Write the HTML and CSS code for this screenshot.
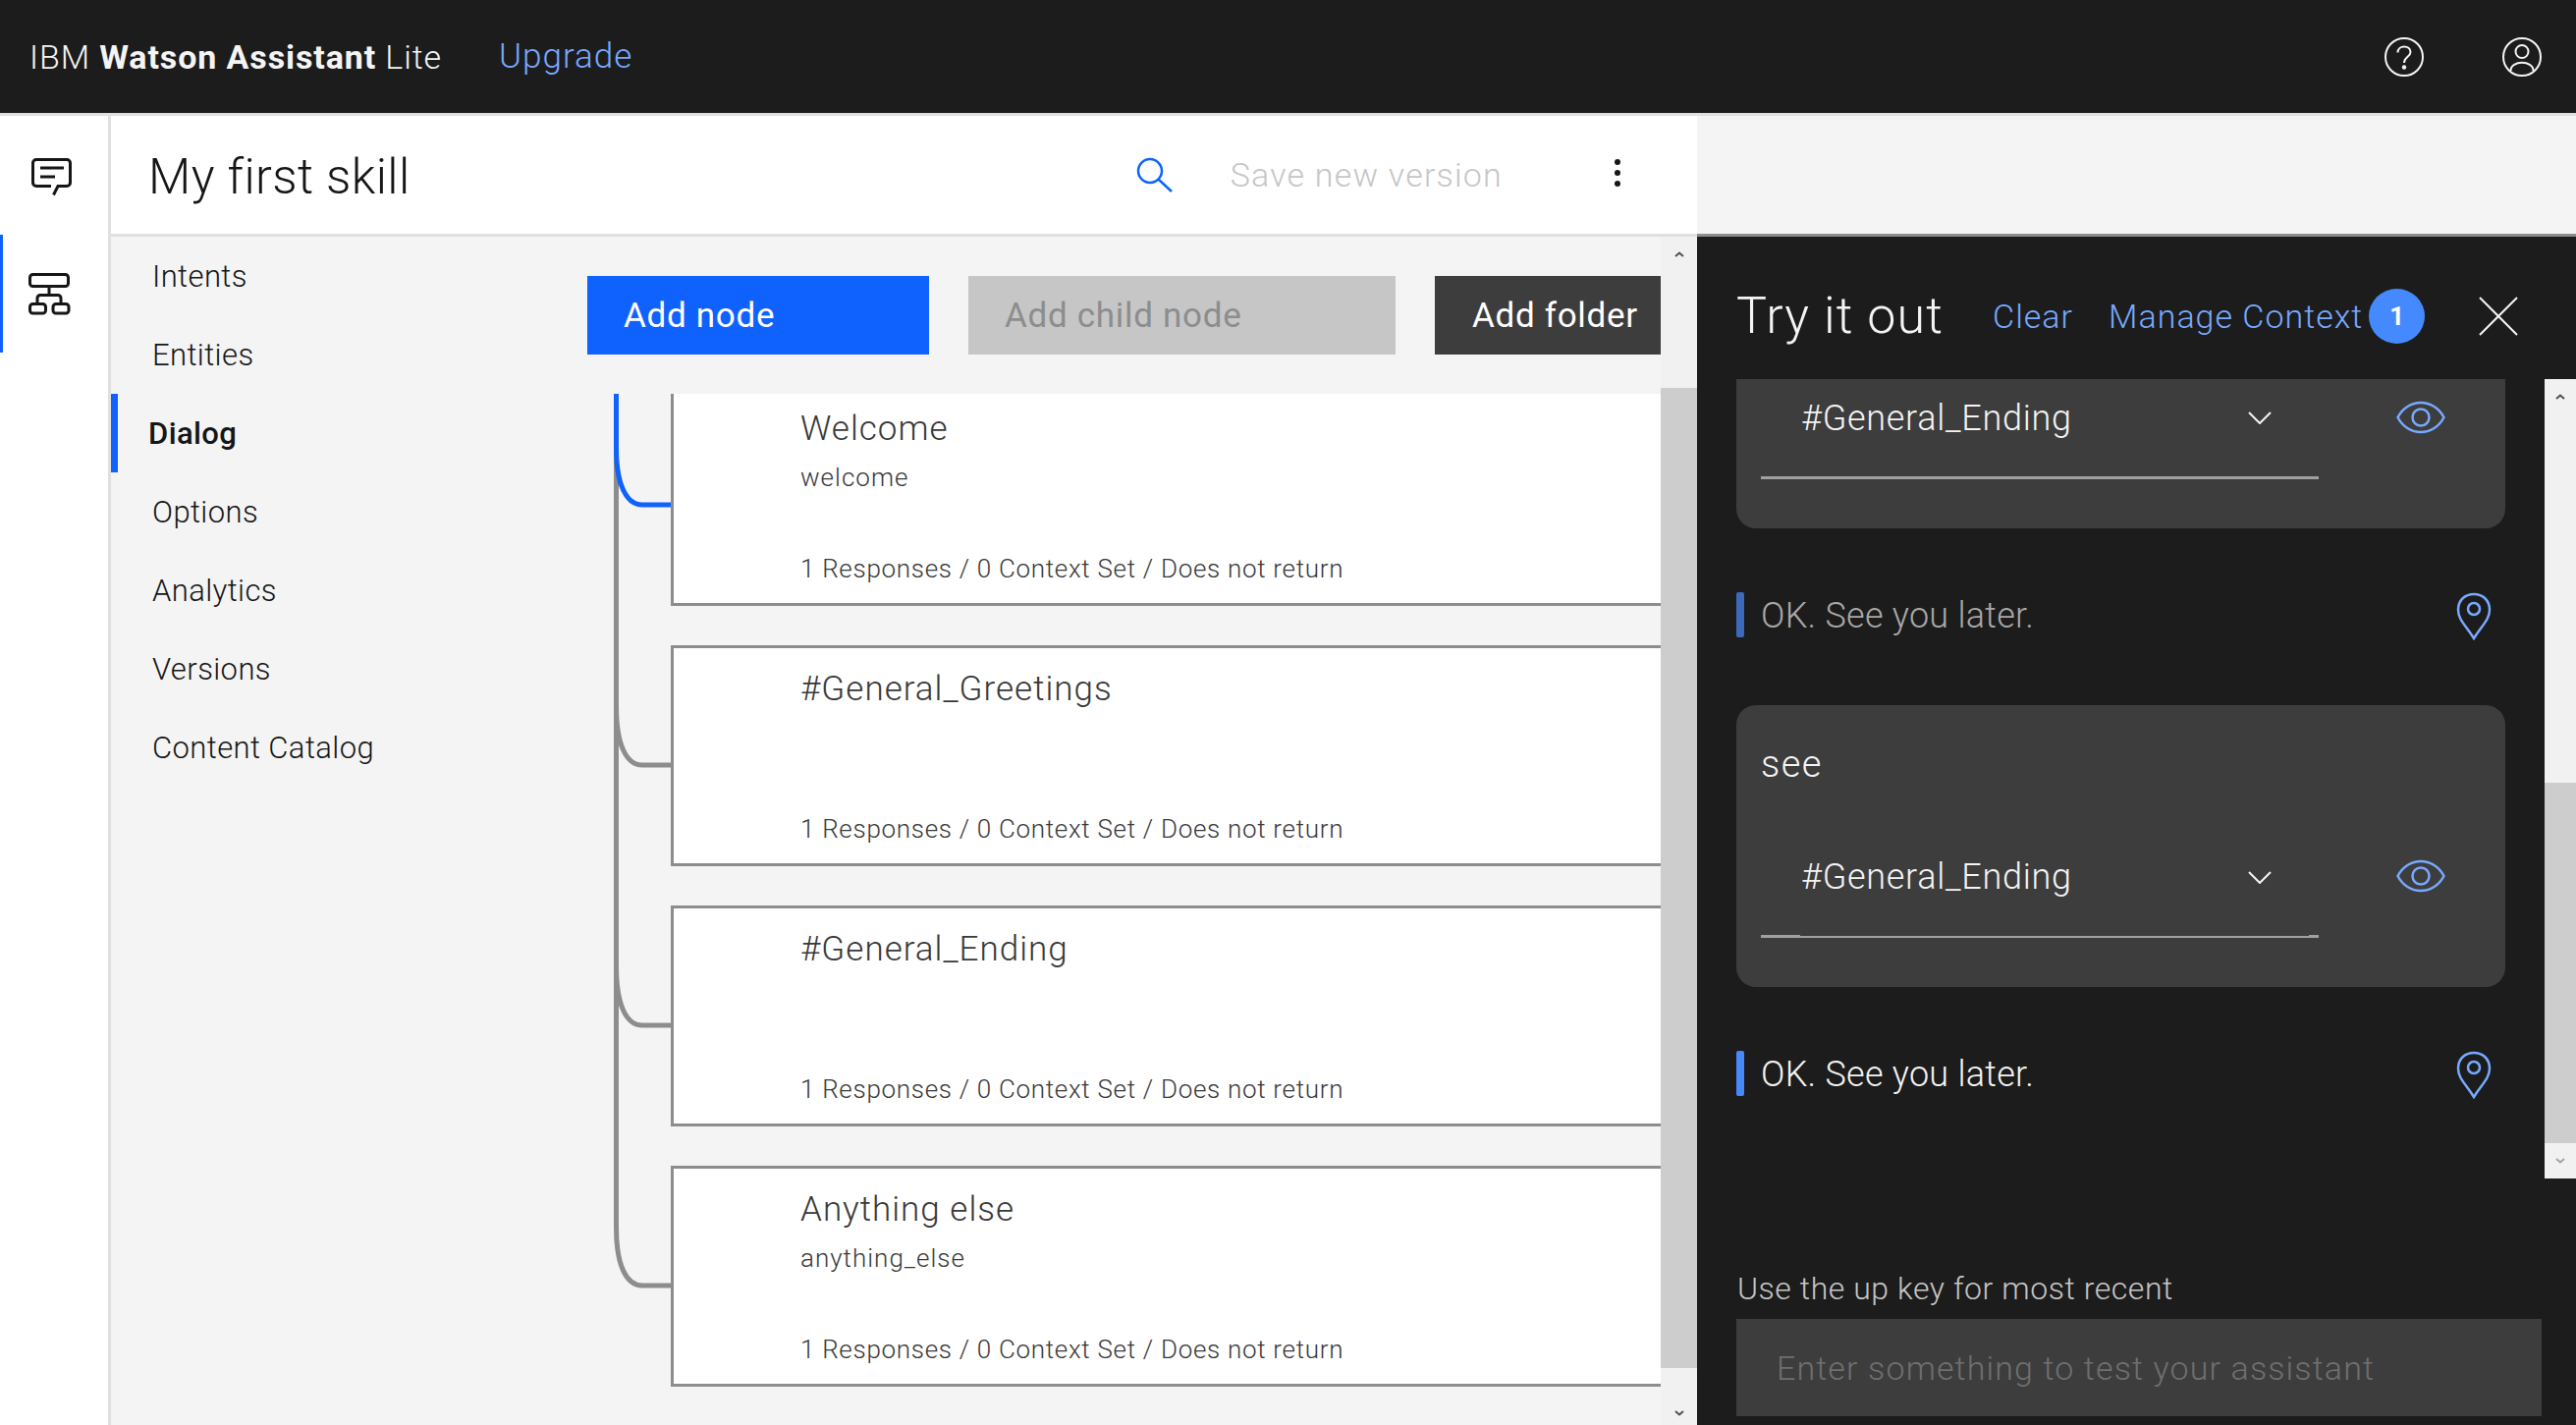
FILE: index.html
```html
<!DOCTYPE html>
<html lang="en">
<head>
  <meta charset="UTF-8" />
  <title>IBM Watson Assistant Lite</title>
  <link rel="stylesheet" href="styles.css">
</head>
<body>

  <header class="topbar">
    <div class="brand">IBM <b>Watson Assistant</b> Lite</div>
    <a class="upgrade" href="#">Upgrade</a>
    <svg class="top-icon help" viewBox="0 0 40 40">
      <circle cx="20" cy="20" r="19"/>
      <path d="M13.5 15.5 C13.5 7.5 26.5 7.5 26.5 15 C26.5 20 20 19.5 20 26"/>
      <circle class="dot" cx="20" cy="30.5" r="2.2"/>
    </svg>
    <svg class="top-icon" viewBox="0 0 40 40">
      <circle cx="20" cy="20" r="19"/>
      <circle cx="20" cy="14.5" r="6.5"/>
      <path d="M8.5 34 C8.5 23 31.5 23 31.5 34"/>
    </svg>
  </header>

  <div class="main">
    <aside class="rail">
      <div class="rail-item chat-item">
        <svg class="rail-icon" viewBox="0 0 48 48">
          <path d="M23 29.5 H8 a3.5 3.5 0 0 1 -3.5 -3.5 V6 a3.5 3.5 0 0 1 3.5 -3.5 H39 a3.5 3.5 0 0 1 3.5 3.5 V26 a3.5 3.5 0 0 1 -3.5 3.5 H30 L25.5 38.5"/>
          <path d="M12 11 H36 M12 20 H27"/>
        </svg>
      </div>
      <div class="rail-item tree-item active">
        <svg class="rail-icon" viewBox="0 0 48 48">
          <rect x="1.5" y="4.5" width="39" height="12" rx="3"/>
          <path d="M21 16.5 V25.5 M9 33 V28.5 a3 3 0 0 1 3 -3 H30 a3 3 0 0 1 3 3 V33"/>
          <rect x="1.5" y="34.5" width="16" height="9.5" rx="3"/>
          <rect x="25" y="34.5" width="16" height="9.5" rx="3"/>
        </svg>
      </div>
    </aside>

    <div class="workspace">
      <div class="skill-head">
        <h1>My first skill</h1>
        <svg class="search" viewBox="0 0 38 36">
          <circle cx="14" cy="14" r="12"/>
          <path d="M22.5 22.5 L36 35"/>
        </svg>
        <span class="save">Save new version</span>
        <div class="more"><i></i><i></i><i></i></div>
      </div>

      <div class="skill-body">
        <nav class="sidenav">
          <a href="#">Intents</a>
          <a href="#">Entities</a>
          <a href="#" class="current">Dialog</a>
          <a href="#">Options</a>
          <a href="#">Analytics</a>
          <a href="#">Versions</a>
          <a href="#">Content Catalog</a>
        </nav>

        <section class="dialog">
          <div class="toolbar">
            <button class="btn btn-add">Add node</button>
            <button class="btn btn-child">Add child node</button>
            <button class="btn btn-folder">Add folder</button>
          </div>
          <div class="tree">
            <svg class="links" viewBox="0 0 90 1000">
              <path d="M29.5 0 V849 C29.5 888 40 908 56 908 H85"/>
              <path d="M29.5 318 C29.5 358 40 378 56 378 H85"/>
              <path d="M29.5 583 C29.5 623 40 643 56 643 H85"/>
              <path class="selected" d="M29.5 0 V55 C29.5 93 40 113 56 113 H86"/>
            </svg>
            <div class="node first">
              <div class="node-title">Welcome</div>
              <div class="node-sub">welcome</div>
              <div class="node-meta">1 Responses / 0 Context Set / Does not return</div>
            </div>
            <div class="node">
              <div class="node-title">#General_Greetings</div>
              <div class="node-sub"></div>
              <div class="node-meta">1 Responses / 0 Context Set / Does not return</div>
            </div>
            <div class="node">
              <div class="node-title">#General_Ending</div>
              <div class="node-sub"></div>
              <div class="node-meta">1 Responses / 0 Context Set / Does not return</div>
            </div>
            <div class="node">
              <div class="node-title">Anything else</div>
              <div class="node-sub">anything_else</div>
              <div class="node-meta">1 Responses / 0 Context Set / Does not return</div>
            </div>
          </div>
        </section>

        <div class="scrollbar main-scroll">
          <svg class="arrow" viewBox="0 0 10 6"><path d="M1 5 L5 1.5 L9 5"/></svg>
          <div class="thumb"></div>
          <svg class="arrow" viewBox="0 0 10 6"><path d="M1 1 L5 4.5 L9 1"/></svg>
        </div>
      </div>
    </div>

    <div class="side">
      <div class="side-top"></div>
      <section class="panel">
        <div class="panel-head">
          <h2>Try it out</h2>
          <a class="clear" href="#">Clear</a>
          <a class="context" href="#">Manage Context</a>
          <span class="badge">1</span>
          <svg class="close" viewBox="0 0 40 40"><path d="M1 1 L39 39 M39 1 L1 39"/></svg>
        </div>

        <div class="chat">
          <div class="log">
            <div class="card clipped">
              <div class="intent-row">
                <div class="select">
                  <span>#General_Ending</span>
                  <svg class="chevron" viewBox="0 0 24 13"><path d="M1 1 L12 12 L23 1"/></svg>
                </div>
                <svg class="eye" viewBox="0 0 50 34">
                  <path d="M1.5 17 C12 -3 38 -3 48.5 17 C38 37 12 37 1.5 17 Z"/>
                  <circle cx="25" cy="17" r="8.5"/>
                </svg>
              </div>
            </div>
            <div class="reply old">
              <div class="reply-bar"></div>
              <div class="reply-text">OK. See you later.</div>
              <svg class="pin" viewBox="0 0 36 49">
                <path d="M18 47 C10 34 2 28 2 18 C2 8 9 2 18 2 C27 2 34 8 34 18 C34 28 26 34 18 47 Z"/>
                <circle cx="18" cy="17" r="6"/>
              </svg>
            </div>
            <div class="card">
              <div class="user-text">see</div>
              <div class="intent-row">
                <div class="select focused">
                  <span>#General_Ending</span>
                  <svg class="chevron" viewBox="0 0 24 13"><path d="M1 1 L12 12 L23 1"/></svg>
                </div>
                <svg class="eye" viewBox="0 0 50 34">
                  <path d="M1.5 17 C12 -3 38 -3 48.5 17 C38 37 12 37 1.5 17 Z"/>
                  <circle cx="25" cy="17" r="8.5"/>
                </svg>
              </div>
            </div>
            <div class="reply">
              <div class="reply-bar"></div>
              <div class="reply-text">OK. See you later.</div>
              <svg class="pin" viewBox="0 0 36 49">
                <path d="M18 47 C10 34 2 28 2 18 C2 8 9 2 18 2 C27 2 34 8 34 18 C34 28 26 34 18 47 Z"/>
                <circle cx="18" cy="17" r="6"/>
              </svg>
            </div>
          </div>
          <div class="scrollbar chat-scroll">
            <svg class="arrow" viewBox="0 0 10 6"><path d="M1 5 L5 1.5 L9 5"/></svg>
            <div class="thumb"></div>
            <svg class="arrow faded" viewBox="0 0 10 6"><path d="M1 1 L5 4.5 L9 1"/></svg>
          </div>
        </div>

        <div class="hint">Use the up key for most recent</div>
        <div class="test-input">Enter something to test your assistant</div>
      </section>
    </div>
  </div>

</body>
</html>
```

FILE: styles.css
```css
* {
  box-sizing: border-box;
}

body {
  margin: 0;
  width: 2623px;
  height: 1451px;
  overflow: hidden;
  font-family: 'Roboto', 'Liberation Sans', sans-serif;
  background-color: #f4f4f4;
  color: #161616;
}

a {
  text-decoration: none;
}

svg {
  display: block;
  flex: none;
  fill: none;
}

/* top bar */
.topbar {
  height: 118px;
  background-color: #1c1c1c;
  border-bottom: 3px solid #e0e0e0;
  display: flex;
  align-items: center;
  padding: 0 35px 0 30px;
  color: #f4f4f4;
}

.brand {
  font-size: 34px;
  font-weight: 300;
  letter-spacing: 0.9px;
}

.brand b {
  font-weight: 700;
}

.upgrade {
  margin-left: 58px;
  font-size: 35px;
  font-weight: 300;
  letter-spacing: 1px;
  color: #78a9ff;
}

.top-icon {
  width: 40px;
  height: 40px;
  margin-left: 80px;
  stroke: #f4f4f4;
  stroke-width: 2;
}

.top-icon.help {
  margin-left: auto;
}

.top-icon .dot {
  fill: #f4f4f4;
  stroke: none;
}

.main {
  display: flex;
  height: 1333px;
}

/* left rail */
.rail {
  width: 113px;
  background-color: #fff;
  border-right: 3px solid #e0e0e0;
}

.rail-item {
  padding-left: 29px;
}

.chat-item {
  height: 121px;
  padding-top: 42px;
}

.tree-item {
  height: 120px;
  padding-top: 36px;
}

.tree-item.active {
  box-shadow: inset 3px 0 0 #0f62fe;
}

.rail-icon {
  width: 48px;
  height: 48px;
  stroke: #161616;
  stroke-width: 3;
}

/* skill area */
.workspace {
  width: 1615px;
}

.skill-head {
  height: 123px;
  background-color: #fff;
  border-bottom: 3px solid #e0e0e0;
  display: flex;
  align-items: center;
  padding-left: 38px;
}

.skill-head h1 {
  margin: 4px 0 0;
  font-size: 50px;
  font-weight: 300;
  letter-spacing: 0.4px;
  color: #161616;
}

.search {
  width: 38px;
  height: 36px;
  margin-left: auto;
  stroke: #0f62fe;
  stroke-width: 2.5;
}

.save {
  margin-left: 58px;
  font-size: 34px;
  font-weight: 300;
  letter-spacing: 1.2px;
  color: #c6c6c6;
}

.more {
  width: 8px;
  margin-left: 114px;
  margin-right: 76px;
}

.more i {
  display: block;
  width: 6px;
  height: 6px;
  margin-bottom: 5px;
  border-radius: 50%;
  background-color: #161616;
}

.skill-body {
  display: flex;
  height: 1210px;
}

.sidenav {
  width: 485px;
  padding-top: 0;
}

.sidenav a {
  display: flex;
  align-items: center;
  height: 80px;
  padding-left: 42px;
  font-size: 31px;
  font-weight: 300;
  letter-spacing: 0.4px;
  color: #161616;
}

.sidenav a.current {
  padding-left: 31px;
  font-weight: 500;
  border-left: 7px solid #0f62fe;
}

.dialog {
  width: 1093px;
}

.toolbar {
  display: flex;
  gap: 40px;
  height: 160px;
  padding-top: 40px;
}

.btn {
  height: 80px;
  padding: 0 0 0 37px;
  border: none;
  text-align: left;
  font-family: inherit;
  font-size: 35px;
  font-weight: 400;
  letter-spacing: 0.7px;
  color: #fff;
}

.btn-add {
  width: 348px;
  background-color: #0f62fe;
}

.btn-child {
  width: 435px;
  background-color: #c6c6c6;
  color: #8d8d8d;
}

.btn-folder {
  width: 230px;
  padding-left: 38px;
  background-color: #3d3d3d;
}

.tree {
  position: relative;
  height: 1050px;
  overflow: hidden;
  padding-left: 85px;
}

.links {
  position: absolute;
  left: 0;
  top: 0;
  width: 90px;
  height: 1000px;
  stroke: #8d8d8d;
  stroke-width: 5;
}

.links .selected {
  stroke: #0f62fe;
  stroke-width: 5;
}

.node {
  position: relative;
  height: 225px;
  margin-bottom: 40px;
  padding: 22px 0 0 129px;
  background-color: #fff;
  border: 3px solid #8d8d8d;
  border-right: none;
  color: #393939;
}

.node.first {
  margin-top: -9px;
}

.node-title {
  height: 40px;
  line-height: 40px;
  font-size: 35px;
  font-weight: 300;
  letter-spacing: 1px;
}

.node-sub {
  height: 30px;
  margin-top: 14px;
  line-height: 30px;
  font-size: 26px;
  font-weight: 300;
  letter-spacing: 1px;
}

.node-meta {
  margin-top: 62px;
  height: 32px;
  line-height: 32px;
  font-size: 26px;
  font-weight: 300;
  letter-spacing: 0.7px;
}

/* scrollbars */
.scrollbar {
  display: flex;
  flex-direction: column;
  align-items: center;
  background-color: #f1f1f1;
}

.arrow {
  width: 10px;
  height: 6px;
  stroke: #505050;
  stroke-width: 2;
}

.arrow.faded {
  stroke: #a3a3a3;
}

.thumb {
  width: 100%;
  background-color: #cdcdcd;
}

.main-scroll {
  width: 37px;
  padding-top: 15px;
}

.main-scroll .thumb {
  height: 998px;
  margin: 133px 0 43px;
}

.chat-scroll {
  width: 32px;
  padding-top: 15px;
}

.chat-scroll .thumb {
  height: 367px;
  margin: 390px 0 15px;
}

/* try it out panel */
.side {
  width: 895px;
}

.side-top {
  height: 123px;
  background-color: #f4f4f4;
  border-bottom: 3px solid #8d8d8d;
}

.panel {
  height: 1210px;
  background-color: #1c1c1c;
}

.panel-head {
  height: 145px;
  display: flex;
  align-items: center;
  padding: 16px 0 0 40px;
}

.panel-head h2 {
  margin: 0;
  font-size: 52px;
  font-weight: 300;
  letter-spacing: 1.1px;
  color: #f4f4f4;
}

.clear,
.context {
  font-size: 34px;
  font-weight: 300;
  letter-spacing: 1px;
  color: #78a9ff;
}

.clear {
  margin-left: 50px;
}

.context {
  margin-left: 36px;
}

.badge {
  width: 57px;
  height: 56px;
  margin-left: 6px;
  border-radius: 50%;
  background-color: #4589ff;
  color: #fff;
  font-size: 26px;
  font-weight: 700;
  line-height: 56px;
  text-align: center;
}

.close {
  width: 40px;
  height: 40px;
  margin-left: 55px;
  stroke: #f4f4f4;
  stroke-width: 2;
}

.chat {
  display: flex;
  height: 814px;
}

.log {
  width: 863px;
  height: 814px;
  overflow: hidden;
  padding: 0 40px;
}

.card {
  padding: 35px 25px 50px;
  background-color: #3d3d3d;
  border-radius: 20px;
  color: #f4f4f4;
}

.card.clipped {
  margin-top: -19px;
}

.user-text {
  height: 50px;
  margin-bottom: 66px;
  line-height: 50px;
  font-size: 38px;
  font-weight: 300;
  letter-spacing: 1.4px;
}

.intent-row {
  display: flex;
  align-items: flex-start;
}

.select {
  position: relative;
  display: flex;
  justify-content: space-between;
  align-items: center;
  width: 568px;
  height: 86px;
  padding: 0 48px 36px 41px;
  border-bottom: 3px solid #a0a0a0;
  font-size: 36px;
  font-weight: 300;
  letter-spacing: 0.7px;
}

.select.focused {
  border-bottom-width: 2px;
}

.select.focused::before,
.select.focused::after {
  content: "";
  position: absolute;
  bottom: -2px;
  height: 3px;
  background-color: #a0a0a0;
}

.select.focused::before {
  left: 0;
  width: 40px;
}

.select.focused::after {
  right: 0;
  width: 10px;
}

.chevron {
  width: 24px;
  height: 13px;
  stroke: #f4f4f4;
  stroke-width: 2;
}

.eye {
  width: 50px;
  height: 34px;
  margin: 6px 0 0 79px;
  stroke: #78a9ff;
  stroke-width: 2.5;
}

.reply {
  display: flex;
  margin: 65px 14px 66px 0;
  height: 49px;
  color: #f4f4f4;
}

.reply-bar {
  width: 8px;
  height: 46px;
  margin-right: 17px;
  border-radius: 2px;
  background-color: #4589ff;
}

.reply-text {
  height: 48px;
  line-height: 48px;
  font-size: 36px;
  font-weight: 300;
  letter-spacing: 0.25px;
}

.reply .pin {
  margin-left: auto;
}

.pin {
  width: 36px;
  height: 49px;
  stroke: #78a9ff;
  stroke-width: 2.5;
}

.reply.old .reply-bar {
  background-color: #3c69b9;
}

.reply.old .reply-text {
  color: #a8a8a8;
}

.hint {
  margin: 92px 0 11px 41px;
  height: 40px;
  line-height: 40px;
  font-size: 32px;
  font-weight: 300;
  letter-spacing: 0.55px;
  color: #c6c6c6;
}

.test-input {
  width: 820px;
  height: 99px;
  margin-left: 40px;
  padding-left: 41px;
  line-height: 101px;
  background-color: #3d3d3d;
  font-size: 34px;
  font-weight: 300;
  letter-spacing: 1.13px;
  color: #6f6f6f;
}
```
